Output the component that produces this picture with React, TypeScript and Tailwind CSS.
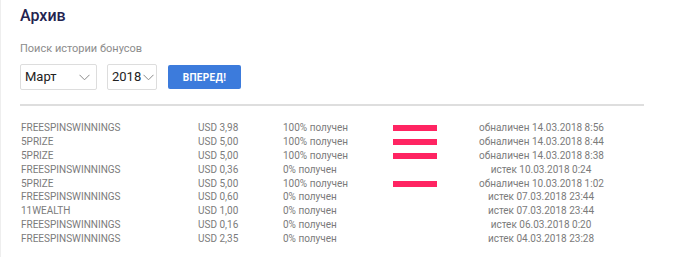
const ROWS = [
  { name: 'FREESPINSWINNINGS', amount: 'USD 3,98', status: '100% получен', bar: true, date: 'обналичен 14.03.2018 8:56' },
  { name: '5PRIZE', amount: 'USD 5,00', status: '100% получен', bar: true, date: 'обналичен 14.03.2018 8:44' },
  { name: '5PRIZE', amount: 'USD 5,00', status: '100% получен', bar: true, date: 'обналичен 14.03.2018 8:38' },
  { name: 'FREESPINSWINNINGS', amount: 'USD 0,36', status: '0% получен', bar: false, date: 'истек 10.03.2018 0:24' },
  { name: '5PRIZE', amount: 'USD 5,00', status: '100% получен', bar: true, date: 'обналичен 10.03.2018 1:02' },
  { name: 'FREESPINSWINNINGS', amount: 'USD 0,60', status: '0% получен', bar: false, date: 'истек 07.03.2018 23:44' },
  { name: '11WEALTH', amount: 'USD 1,00', status: '0% получен', bar: false, date: 'истек 07.03.2018 23:44' },
  { name: 'FREESPINSWINNINGS', amount: 'USD 0,16', status: '0% получен', bar: false, date: 'истек 06.03.2018 0:20' },
  { name: 'FREESPINSWINNINGS', amount: 'USD 2,35', status: '0% получен', bar: false, date: 'истек 04.03.2018 23:28' },
];

function Chevron() {
  return (
    <svg width="11" height="7" viewBox="0 0 11 7" fill="none" stroke="#8a8a8a" strokeWidth="1">
      <path d="M0.5 0.8 L5.5 5.8 L10.5 0.8" />
    </svg>
  );
}

export default function App() {
  return (
    <div className="w-[680px] h-[257px] bg-white border-l border-[#eeeeee] font-['Roboto',sans-serif] overflow-hidden">
      <div className="pl-[19px] pr-[36px] pt-[5px]">
        <h1 className="text-[16px] leading-[22px] font-medium text-[#232350]">Архив</h1>

        <p className="mt-[15px] text-[11px] leading-[14px] text-[#8c8c8c]">Поиск истории бонусов</p>

        <div className="mt-[8px] flex items-center">
          <div className="w-[77px] h-[26px] border border-[#dddddd] rounded-[2px] flex items-center justify-between pl-[4px] pr-[6px]">
            <span className="text-[13px] text-[#222222]">Март</span>
            <Chevron />
          </div>
          <div className="ml-[10px] w-[50px] h-[26px] border border-[#dddddd] rounded-[2px] flex items-center pl-[4px]">
            <span className="text-[13px] text-[#222222]">2018</span>
            <span className="ml-[2px]"><Chevron /></span>
          </div>
          <button className="ml-[11px] w-[73px] h-[24px] rounded-[2px] bg-[#3c7bdc] text-white text-[10px] font-bold tracking-[0.3px]">
            ВПЕРЕД!
          </button>
        </div>

        <div className="mt-[14px] h-[2px] bg-[#dedede] w-[624px]" />

        <div className="mt-[15px] text-[10px] leading-[13.9px] text-[#7b7b7b] whitespace-nowrap">
          {ROWS.map((r, i) => (
            <div key={i} className="flex items-center h-[13.9px]">
              <span className="w-[178px] pl-[1px]">{r.name}</span>
              <span className="w-[85px]">{r.amount}</span>
              <span className="w-[110px]">{r.status}</span>
              <span className="w-[86px] flex">
                {r.bar && <span className="block w-[44px] h-[6px] bg-[#ff2462]" />}
              </span>
              <span className="w-[124px] text-center">{r.date}</span>
            </div>
          ))}
        </div>
      </div>
    </div>
  );
}
